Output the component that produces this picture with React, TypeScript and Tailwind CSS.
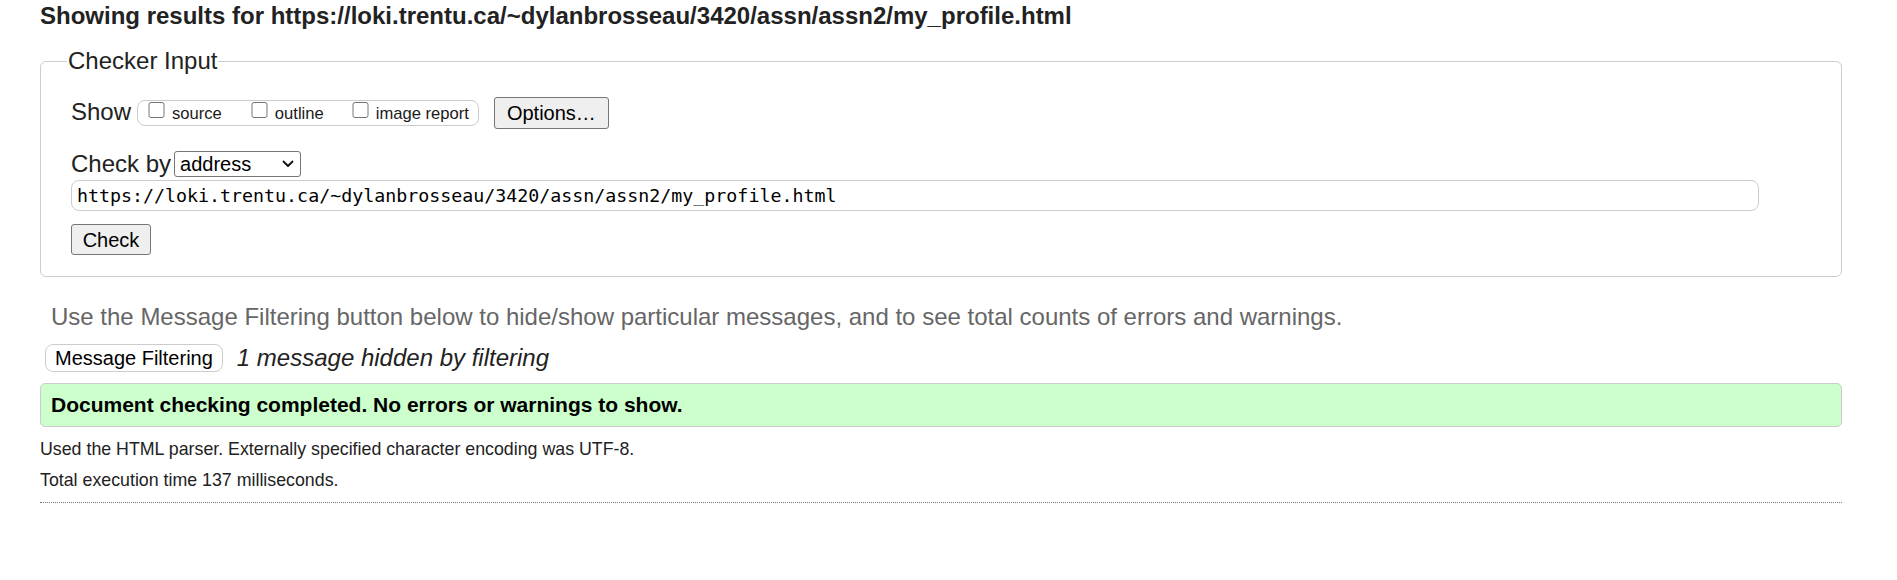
import { useState } from "react";

const PAGE_URL = "https://loki.trentu.ca/~dylanbrosseau/3420/assn/assn2/my_profile.html";

function ShowOption({ label, className = "" }: { label: string; className?: string }) {
  return (
    <label className={`flex items-start ${className}`}>
      <input type="checkbox" className="m-0 h-[16px] w-[17px]" />
      <span className="ml-[7px] mt-[1px] text-[16.6px] leading-[22px]">{label}</span>
    </label>
  );
}

export default function App() {
  const [url, setUrl] = useState(PAGE_URL);

  return (
    <main className="min-h-[580px] bg-white pl-[40px] pr-[55px] text-[#1a1a1a] font-['Liberation_Sans',Arial,sans-serif]">
      {/* Results heading */}
      <h2 className="pt-[3px] text-[24px] font-bold leading-[26px] text-[#222]">
        Showing results for {PAGE_URL}
      </h2>

      {/* Checker form */}
      <fieldset className="mt-[18px] rounded-[6px] border border-[#cccccc] pl-[30px] pr-[20px] pt-[22px] pb-[21px]">
        <legend className="-ml-[4px] px-[1px] text-[24px] leading-[28px] text-[#222]">Checker Input</legend>

        <div className="flex h-[32px] items-center">
          <span className="mt-[-2px] text-[24px] leading-[28px] text-[#222]">Show</span>
          <div className="ml-[6px] flex h-[26px] items-start rounded-[8px] border border-[#cccccc] pl-[10px] pr-[9px] pt-[1px]">
            <ShowOption label="source" />
            <ShowOption label="outline" className="ml-[29px]" />
            <ShowOption label="image report" className="ml-[28px]" />
          </div>
          <button className="ml-[15px] h-[32px] rounded-[3px] border border-[#767676] bg-[#efefef] px-[12px] text-[20px] leading-[24px] text-black">
            Options…
          </button>
        </div>

        <div className="mt-[22px] flex h-[26px] items-center">
          <span className="text-[24px] leading-[28px] text-[#222]">Check by</span>
          <div className="ml-[3px] flex h-[26px] w-[127px] items-center justify-between rounded-[3px] border border-[#767676] pl-[5px] pr-[6px]">
            <span className="text-[20px] leading-[24px] text-black">address</span>
            <svg width="12" height="8" viewBox="0 0 12 8" fill="none">
              <path d="M1.5 1.5 6 6l4.5-4.5" stroke="#111" strokeWidth="1.8" strokeLinecap="round" strokeLinejoin="round" />
            </svg>
          </div>
        </div>

        <input
          value={url}
          onChange={(e) => setUrl(e.target.value)}
          className="mt-[3px] block h-[31px] w-[1688px] rounded-[8px] border border-[#cccccc] px-[5px] py-0 font-['DejaVu_Sans_Mono',Consolas,monospace] text-[18.3px] leading-[24px] text-black"
        />

        <button className="mt-[13px] block h-[31px] w-[80px] rounded-[3px] border border-[#767676] bg-[#efefef] text-[20px] leading-[24px] text-black">
          Check
        </button>
      </fieldset>

      {/* Filtering */}
      <p className="ml-[11px] mt-[26px] text-[24px] leading-[28px] text-[#666]">
        Use the Message Filtering button below to hide/show particular messages, and to see total counts of errors and warnings.
      </p>
      <div className="ml-[5px] mt-[13px] flex items-center">
        <button className="h-[28px] rounded-[8px] border border-[#cccccc] bg-white px-[9px] text-[20px] leading-[24px] text-black">
          Message Filtering
        </button>
        <span className="ml-[14px] text-[24px] italic leading-[28px] text-[#222]">1 message hidden by filtering</span>
      </div>

      {/* Result */}
      <div className="mt-[11px] flex h-[44px] items-center rounded-[5px] border border-[#cccccc] bg-[#ccffcc] pl-[10px]">
        <span className="text-[21px] font-bold leading-[24px] text-black">
          Document checking completed. No errors or warnings to show.
        </span>
      </div>

      <p className="mt-[11px] text-[17.8px] leading-[22px] text-[#222]">
        Used the HTML parser. Externally specified character encoding was UTF-8.
      </p>
      <p className="mt-[9px] text-[17.8px] leading-[22px] text-[#222]">Total execution time 137 milliseconds.</p>

      <hr className="mt-[11px] border-0 border-t border-dotted border-[#777]" />
    </main>
  );
}
